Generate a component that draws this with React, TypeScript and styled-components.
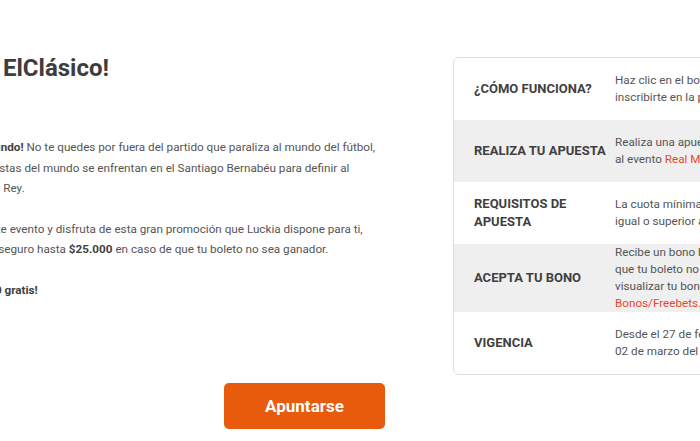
import styled, { createGlobalStyle } from "styled-components";
import { FC, ReactNode } from "react";

const GlobalStyle = createGlobalStyle`
  html, body {
    margin: 0;
    padding: 0;
    background: #ffffff;
  }
  body {
    font-family: Roboto, "Liberation Sans", Arial, sans-serif;
    overflow: hidden;
  }
`;

const Page = styled.div`
  width: 700px;
  height: 441px;
  overflow: hidden;
  padding-top: 54px;
  box-sizing: border-box;
`;

const Top = styled.div`
  display: flex;
  align-items: flex-start;
  gap: 53px;
`;

const Intro = styled.div`
  width: 400px;
  flex-shrink: 0;
`;

const Title = styled.h1`
  margin: 0 0 54px;
  padding-left: 3px;
  font-size: 24px;
  line-height: 29px;
  font-weight: 700;
  color: #3d3d3d;
  white-space: nowrap;
`;

const Paragraph = styled.p`
  margin: 0 0 20px;
  font-size: 11.7px;
  line-height: 20.5px;
  color: #555555;
`;

const Line = styled.span<{ $indent: number }>`
  display: block;
  white-space: nowrap;
  text-indent: ${({ $indent }) => $indent}px;
`;

const Strong = styled.b`
  font-weight: 700;
  color: #3f3f3f;
`;

const Table = styled.div`
  margin-top: 3px;
  width: 320px;
  flex-shrink: 0;
  border: 1px solid #dddddd;
  border-radius: 6px;
  overflow: hidden;
`;

const Row = styled.div<{ $shaded?: boolean }>`
  display: grid;
  grid-template-columns: 141px 1fr;
  align-items: center;
  min-height: 62px;
  padding-left: 20px;
  background: ${({ $shaded }) => ($shaded ? "#efefef" : "#ffffff")};
`;

const Label = styled.div`
  font-size: 13px;
  line-height: 18px;
  font-weight: 700;
  color: #3f3f3f;
  text-transform: uppercase;
`;

const Value = styled.div`
  font-size: 11.7px;
  line-height: 17px;
  color: #555555;
  white-space: nowrap;
`;

const Link = styled.span`
  color: #e8472b;
`;

const Footer = styled.div`
  display: flex;
  padding-left: 224px;
  margin-top: 8px;
`;

const Button = styled.button`
  width: 161px;
  height: 46px;
  border: none;
  border-radius: 5px;
  background: #e85a0c;
  color: #ffffff;
  font-family: Roboto, "Liberation Sans", Arial, sans-serif;
  font-size: 17px;
  font-weight: 700;
  cursor: pointer;
`;

type StepType = {
  label: string;
  shaded?: boolean;
  children: ReactNode;
};

const Step: FC<StepType> = ({ label, shaded, children }) => (
  <Row $shaded={shaded}>
    <Label>{label}</Label>
    <Value>{children}</Value>
  </Row>
);

export default function App() {
  return (
    <>
      <GlobalStyle />
      <Page>
        <Top>
          <Intro>
            <Title>ElClásico!</Title>
            <Paragraph>
              <Line $indent={-16}>
                <Strong>mundo!</Strong> No te quedes por fuera del partido que
                paraliza al mundo del fútbol,
              </Line>
              <Line $indent={-34}>
                futbolistas del mundo se enfrentan en el Santiago Bernabéu para
                definir al
              </Line>
              <Line $indent={-15.3}>del Rey.</Line>
            </Paragraph>
            <Paragraph>
              <Line $indent={-15.5}>
                este evento y disfruta de esta gran promoción que Luckia dispone
                para ti,
              </Line>
              <Line $indent={-17.5}>
                un seguro hasta <Strong>$25.000</Strong> en caso de que tu
                boleto no sea ganador.
              </Line>
            </Paragraph>
            <Paragraph>
              <Line $indent={-42}>
                <Strong>$25.000 gratis!</Strong>
              </Line>
            </Paragraph>
          </Intro>
          <Table>
            <Step label="¿Cómo funciona?">
              Haz clic en el botón Apuntarse para
              <br />
              inscribirte en la promoción.
            </Step>
            <Step label="Realiza tu apuesta" shaded>
              Realiza una apuesta de mínimo $5.000
              <br />
              al evento <Link>Real Madrid vs Barcelona</Link>.
            </Step>
            <Step label="Requisitos de apuesta">
              La cuota mínima de tu apuesta debe ser
              <br />
              igual o superior a 1.50.
            </Step>
            <Step label="Acepta tu bono" shaded>
              Recibe un bono hasta $25.000 en caso de
              <br />
              que tu boleto no sea ganador. Podrás
              <br />
              visualizar tu bono en la sección
              <br />
              <Link>Bonos/Freebets.</Link>
            </Step>
            <Step label="Vigencia">
              Desde el 27 de febrero hasta el
              <br />
              02 de marzo del 2023.
            </Step>
          </Table>
        </Top>
        <Footer>
          <Button>Apuntarse</Button>
        </Footer>
      </Page>
    </>
  );
}
